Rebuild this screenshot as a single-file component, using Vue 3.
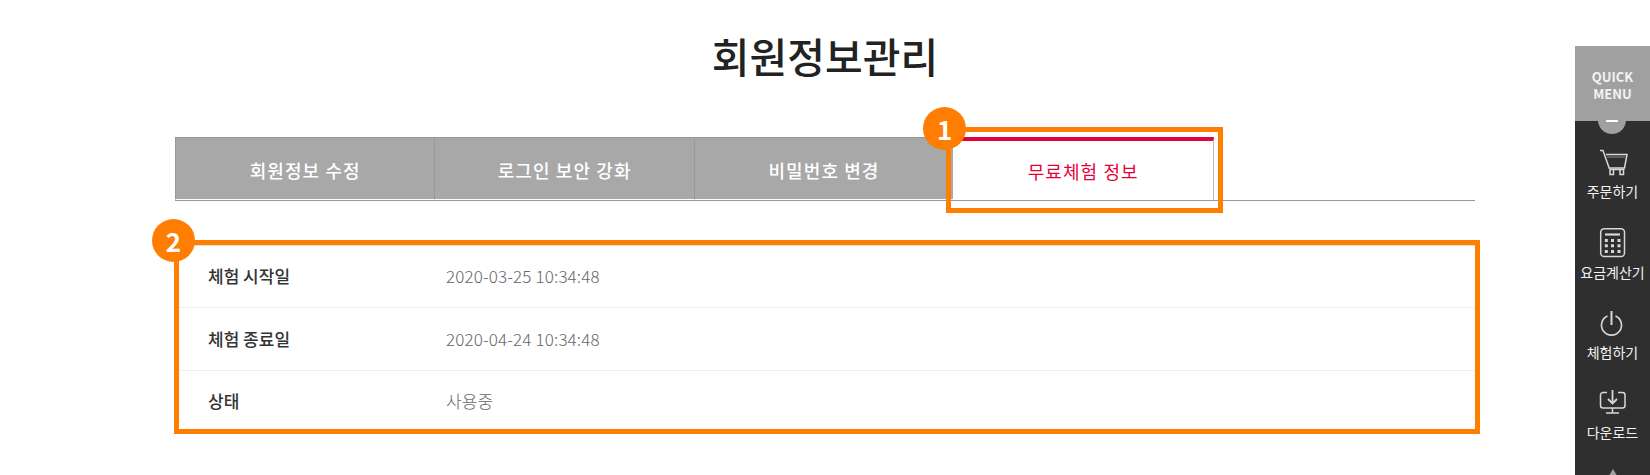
<script setup>
const tabs = [
  { label: '회원정보 수정' },
  { label: '로그인 보안 강화' },
  { label: '비밀번호 변경' },
  { label: '무료체험 정보', active: true },
]

const rows = [
  { label: '체험 시작일', value: '2020-03-25 10:34:48' },
  { label: '체험 종료일', value: '2020-04-24 10:34:48' },
  { label: '상태', value: '사용중' },
]

const quickItems = [
  { key: 'cart', label: '주문하기' },
  { key: 'calc', label: '요금계산기' },
  { key: 'power', label: '체험하기' },
  { key: 'download', label: '다운로드' },
]
</script>

<template>
  <div class="page">
    <main class="content">
      <h1 class="title">회원정보관리</h1>

      <ul class="tabs">
        <li
          v-for="tab in tabs"
          :key="tab.label"
          class="tab"
          :class="{ active: tab.active }"
        >
          {{ tab.label }}
          <template v-if="tab.active">
            <span class="mark mark-tab"></span>
            <span class="badge badge-tab">1</span>
          </template>
        </li>
      </ul>

      <div class="info">
        <div v-for="row in rows" :key="row.label" class="row">
          <span class="row-label">{{ row.label }}</span>
          <span class="row-value">{{ row.value }}</span>
        </div>
        <span class="mark mark-info"></span>
        <span class="badge badge-info">2</span>
      </div>
    </main>

    <aside class="quick">
      <div class="quick-head">QUICK<br />MENU<span class="quick-toggle"></span></div>
      <ul class="quick-list">
        <li v-for="item in quickItems" :key="item.key" class="quick-item" :class="item.key">
          <div class="quick-icon">
            <svg v-if="item.key === 'cart'" width="30" height="30" viewBox="0 0 30 30" fill="none" stroke="#d8d8d8" stroke-width="1.5">
              <path d="M2 3.500h3L11.500 22" />
              <path d="M8 7.500h21L26.500 21h-15" />
              <path d="M9 10h18" stroke-width="1" stroke="#8a8a8a" />
              <path d="M11.500 22.500h15" />
              <path d="M12 23v4.500h3.500V23M22 23v4.500h3.500V23" />
            </svg>
            <svg v-else-if="item.key === 'calc'" width="30" height="30" viewBox="0 0 30 30" fill="none" stroke="#d8d8d8" stroke-width="1.500">
              <rect x="2.700" y="0.800" width="23.800" height="27.800" rx="3.500" />
              <path d="M7 6.500h15" stroke-width="2.200" />
              <path d="M6.800 12.500h3M13 12.500h3M19.500 12.500h3M6.800 17.700h3M13 17.700h3M19.500 17.700h3M6.800 23.500h3M13 23.500h3M19.500 23.500h3" stroke-width="3" />
            </svg>
            <svg v-else-if="item.key === 'power'" width="30" height="30" viewBox="0 1 30 30" fill="none" stroke="#d8d8d8" stroke-width="1.600">
              <path d="M9.500 9a10 10 0 1 0 8 0" />
              <path d="M13.500 4v14" stroke-width="2" />
            </svg>
            <svg v-else width="30" height="30" viewBox="0 0 30 30" fill="none" stroke="#d8d8d8" stroke-width="1.500">
              <path d="M9 4.500H5A2.500 2.500 0 0 0 2.500 7v10.500A2.500 2.500 0 0 0 5 20h19.500a2.500 2.500 0 0 0 2.500-2.500V7a2.500 2.500 0 0 0-2.500-2.500H20" />
              <path d="M14.500 2v13M10 11l4.500 4.500L19 11" stroke-width="1.800" />
              <path d="M14.500 20v5M8 25h13" />
            </svg>
          </div>
          <span class="quick-label">{{ item.label }}</span>
        </li>
      </ul>
      <div class="quick-up"></div>
    </aside>
  </div>
</template>

<style>
html,
body {
  margin: 0;
  background: #fff;
  overflow: hidden;
}
</style>

<style scoped>
.page {
  position: relative;
  width: 1650px;
  height: 475px;
  overflow: hidden;
  font-family: "Noto Sans CJK KR", "Noto Sans", sans-serif;
  background: #fff;
}

.content {
  width: 1300px;
  margin: 0 auto;
}

.title {
  margin: 0 0 52px;
  padding-top: 25px;
  font-size: 41px;
  line-height: 60px;
  font-weight: 500;
  color: #222;
  text-align: center;
}

.tabs {
  display: flex;
  margin: 0;
  padding: 0;
  list-style: none;
  height: 64px;
  border-bottom: 1px solid #999;
  box-sizing: border-box;
}

.tab {
  position: relative;
  width: 259.400px;
  height: 63px;
  box-sizing: border-box;
  display: flex;
  align-items: center;
  justify-content: center;
  padding-top: 2px;
  background: #a8a8a8;
  border-top: 1px solid #999;
  border-left: 1px solid #999;
  border-bottom: 1px solid #fff;
  color: #fff;
  font-size: 18px;
  letter-spacing: 1.100px;
  font-weight: 500;
}

.tab.active {
  width: 261px;
  padding-top: 0;
  background: #fff;
  color: #e6003a;
  font-weight: 400;
  border-top: 4px solid #e6003a;
  border-left: 0;
  border-right: 1px solid #bbb;
  border-bottom: 0;
}

.info {
  position: relative;
  margin-top: 44px;
  border-top: 1px solid #e2e2e2;
}

.row {
  display: flex;
  align-items: center;
  height: 60px;
  padding-bottom: 2px;
  padding-left: 33px;
  border-bottom: 1px solid #f0f0f0;
  font-size: 17px;
}

.row:first-child {
  height: 59px;
}

.row:last-of-type {
  height: 57px;
  padding-top: 1px;
  padding-bottom: 0;
  border-bottom: 0;
}

.row-label {
  width: 238px;
  font-weight: 500;
  color: #333;
}

.row-value {
  color: #666;
  font-weight: 300;
  letter-spacing: 0.150px;
}

.mark {
  position: absolute;
  box-sizing: border-box;
  border: 5px solid #ff7d00;
  pointer-events: none;
}

.mark-tab {
  left: -7px;
  right: -10px;
  top: -14px;
  bottom: -13px;
}

.mark-info {
  left: -1px;
  right: -5px;
  top: -6px;
  bottom: -5px;
}

.badge {
  position: absolute;
  width: 43px;
  height: 43px;
  border-radius: 50%;
  background: #ff7d00;
  color: #fff;
  font-size: 26px;
  font-weight: 700;
  line-height: 43px;
  text-align: center;
  letter-spacing: 0;
}

.badge-tab {
  left: -30px;
  top: -34px;
}

.badge-info {
  left: -23px;
  top: -27px;
}

.quick {
  position: absolute;
  top: 46px;
  right: 0;
  width: 75px;
  height: 429px;
  background: #2f2f2f;
  color: #fff;
  text-align: center;
}

.quick-head {
  position: relative;
  height: 75px;
  box-sizing: border-box;
  padding-top: 22px;
  background: #a0a0a0;
  font-size: 13px;
  font-weight: 700;
  line-height: 17px;
  color: #f2f2f2;
}

.quick-toggle {
  position: absolute;
  left: 23px;
  top: 60px;
  width: 28px;
  height: 28px;
  border-radius: 50%;
  background: #a0a0a0;
}

.quick-toggle::after {
  content: "";
  position: absolute;
  left: 8px;
  top: 14px;
  width: 12px;
  height: 2px;
  background: #fff;
}

.quick-list {
  margin: 0;
  padding: 21px 0 0;
  list-style: none;
}

.quick-item {
  position: relative;
  margin-bottom: 21px;
}

.quick-icon {
  height: 40px;
  display: flex;
  align-items: center;
  justify-content: center;
}

.calc .quick-icon {
  height: 41px;
}

.quick-label {
  display: block;
  margin-top: -1px;
  font-size: 14px;
  line-height: 20px;
  white-space: nowrap;
  color: #f2f2f2;
}

.quick-up {
  width: 0;
  height: 0;
  margin: 27px auto 0;
  border-left: 6px solid transparent;
  border-right: 6px solid transparent;
  border-bottom: 10px solid #a0a0a0;
}
</style>
